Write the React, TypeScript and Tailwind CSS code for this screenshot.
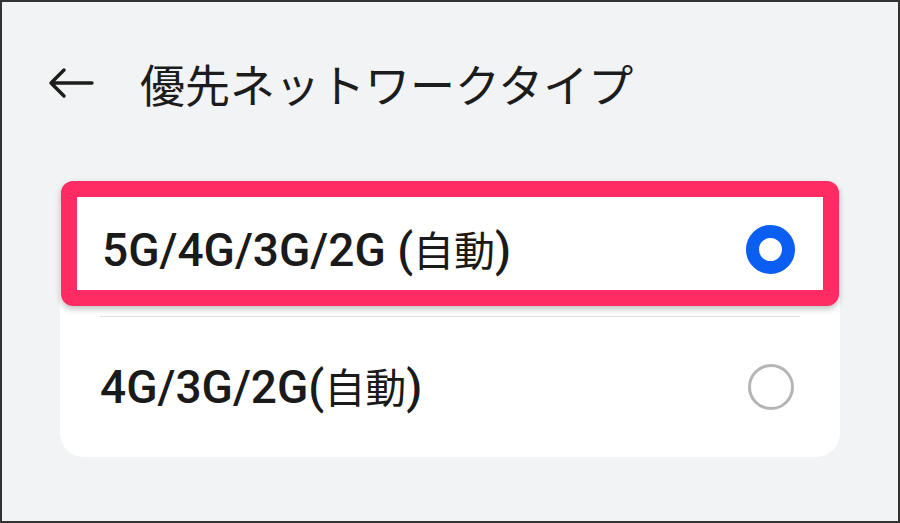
export default function App() {
  const latin = { fontFamily: 'Roboto, "Noto Sans CJK JP", sans-serif' };
  const cjk = { fontFamily: '"Noto Sans CJK JP", sans-serif' };

  return (
    <div className="box-border h-[523px] w-[900px] overflow-hidden border-2 border-[#333] bg-[#f2f3f5]">
      {/* header */}
      <div className="flex h-[162px] items-center pl-[46px]">
        <svg width="46" height="32" viewBox="0 0 46 32" fill="none" stroke="#1c1c1c" strokeWidth="3.4" strokeLinecap="round" strokeLinejoin="round">
          <path d="M44 16H3M16 3 3 16l13 13" />
        </svg>
        <h1 className="ml-[46px] text-[45px] font-normal leading-none text-[#1c1c1c]" style={cjk}>
          優先ネットワークタイプ
        </h1>
      </div>

      {/* options card */}
      <div className="relative mx-[58px] mt-[19px] rounded-3xl bg-white">
        <div className="flex h-[133px] items-center justify-between pl-[42px] pr-[45px]">
          <span className="text-[46px] font-medium leading-none text-[#1a1a1a]" style={latin}>
            5G/4G/3G/2G (<span className="text-[41px] font-normal" style={cjk}>自動</span>)
          </span>
          <span className="box-border h-[49px] w-[49px] rounded-full border-[13px] border-[#0a5ef2] bg-white" />
        </div>
        <div className="mx-[40px] h-px bg-[#e2e2e2]" />
        <div className="flex h-[140px] items-center justify-between pl-[40px] pr-[46px]">
          <span className="text-[46px] font-medium leading-none text-[#1a1a1a]" style={latin}>
            4G/3G/2G(<span className="text-[41px] font-normal" style={cjk}>自動</span>)
          </span>
          <span className="box-border h-[46px] w-[46px] rounded-full border-[3px] border-[#b5b5b5] bg-white" />
        </div>

        {/* highlight frame */}
        <div className="pointer-events-none absolute left-px right-px top-[-2px] box-border h-[125px] rounded-[12px] border-[16px] border-[#ff2b63] shadow-[0_3px_6px_rgba(0,0,0,0.25)]" />
      </div>
    </div>
  );
}
